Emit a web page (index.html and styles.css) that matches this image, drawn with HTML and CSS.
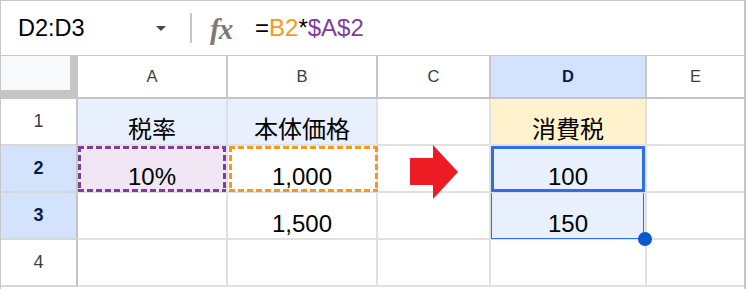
FILE: index.html
```html
<!DOCTYPE html>
<html lang="ja">
<head>
<meta charset="utf-8">
<title>消費税の計算</title>
<link rel="stylesheet" href="styles.css">
</head>
<body>
<div class="sheet">
  <div class="formula-bar">
    <div class="name-box">
      <span class="range">D2:D3</span>
      <span class="caret"></span>
    </div>
    <div class="divider"></div>
    <span class="fx">fx</span>
    <div class="formula"><span>=</span><span class="ref-b">B2</span><span>*</span><span class="ref-a">$A$2</span></div>
  </div>

  <div class="grid">
    <div class="corner"></div>
    <div class="col-head">A</div>
    <div class="col-head">B</div>
    <div class="col-head">C</div>
    <div class="col-head selected">D</div>
    <div class="col-head last">E</div>

    <div class="row-head">1</div>
    <div class="cell fill-blue">税率</div>
    <div class="cell fill-blue">本体価格</div>
    <div class="cell"></div>
    <div class="cell fill-yellow">消費税</div>
    <div class="cell last"></div>

    <div class="row-head selected">2</div>
    <div class="cell fill-lavender">10%<span class="marquee purple"></span></div>
    <div class="cell">1,000<span class="marquee orange"></span></div>
    <div class="cell"></div>
    <div class="cell fill-range">100<span class="active-box"></span></div>
    <div class="cell last"></div>

    <div class="row-head selected">3</div>
    <div class="cell"></div>
    <div class="cell">1,500</div>
    <div class="cell"></div>
    <div class="cell fill-range">150<span class="range-box"></span><span class="fill-handle"></span></div>
    <div class="cell last"></div>

    <div class="row-head">4</div>
    <div class="cell"></div>
    <div class="cell"></div>
    <div class="cell"></div>
    <div class="cell"></div>
    <div class="cell last"></div>

    <svg class="arrow" width="48" height="54" viewBox="0 0 48 54">
      <polygon points="0,13 23,13 23,0 48,27 23,54 23,40 0,40" fill="#ed1c24"/>
    </svg>
  </div>
</div>
</body>
</html>
```

FILE: styles.css
```css
* {
  box-sizing: border-box;
}

body {
  margin: 0;
  background: #ffffff;
  font-family: "Liberation Sans", Arial, "Noto Sans CJK JP", sans-serif;
}

.sheet {
  width: 746px;
  height: 289px;
  border-top: 1px solid #c7c7c7;
  border-left: 1px solid #c7c7c7;
  border-right: 2px solid #c7c7c7;
  overflow: hidden;
}

/* ---- formula bar ---- */
.formula-bar {
  height: 55px;
  display: flex;
  align-items: center;
  border-bottom: 1px solid #c7c7c7;
}

.name-box {
  width: 189px;
  display: flex;
  align-items: center;
  justify-content: space-between;
  padding: 0 24px 0 17px;
}

.range {
  font-size: 23.5px;
  color: #000000;
}

.caret {
  width: 0;
  height: 0;
  border-left: 5px solid transparent;
  border-right: 5px solid transparent;
  border-top: 5px solid #444746;
}

.divider {
  width: 2px;
  height: 30px;
  background: #c7c7c7;
}

.fx {
  margin-left: 18px;
  width: 27px;
  font-family: "Liberation Serif", "Times New Roman", serif;
  font-style: italic;
  font-weight: bold;
  font-size: 29px;
  color: #7a7a7a;
  letter-spacing: -1px;
  line-height: 1;
  margin-top: 2px;
}

.formula {
  margin-left: 18px;
  font-size: 24px;
  color: #000000;
}

.ref-b {
  color: #f7981d;
}

.ref-a {
  color: #7e3f98;
}

/* ---- grid ---- */
.grid {
  position: relative;
  display: grid;
  grid-template-columns: 77px 150px 150px 113px 156px 1fr;
  grid-template-rows: 43px repeat(4, 47px);
}

.corner {
  background: #f8f9fa;
  border-right: 8px solid #c6c6c6;
  border-bottom: 9px solid #c6c6c6;
}

.col-head {
  display: flex;
  align-items: center;
  justify-content: center;
  font-size: 16.5px;
  color: #3c4043;
  border-right: 2px solid #c7c7c7;
  border-bottom: 2px solid #c4c4c4;
}

.col-head.last {
  border-right: none;
}

.col-head.selected,
.row-head.selected {
  background: #d3e3fd;
  color: #041e49;
  font-weight: bold;
}

.row-head {
  display: flex;
  align-items: center;
  justify-content: center;
  font-size: 18px;
  color: #3c4043;
  border-right: 2px solid #c4c4c4;
  border-bottom: 2px solid #d6d6d6;
}

.cell {
  position: relative;
  display: flex;
  align-items: flex-end;
  justify-content: center;
  padding-bottom: 1px;
  font-size: 24px;
  line-height: 27px;
  color: #000000;
  border-right: 2px solid #e1e1e1;
  border-bottom: 2px solid #e1e1e1;
}

.cell.last {
  border-right: none;
}

.fill-blue {
  background: #e8f0fe;
}

.fill-yellow {
  background: #fff2cc;
}

.fill-lavender {
  background: #f1e7f4;
}

.fill-range {
  background: #e8f0fe;
}

/* copy marquee around a referenced cell */
.marquee {
  position: absolute;
  top: 0;
  left: 0;
  right: -2px;
  bottom: -1px;
  pointer-events: none;
  background:
    repeating-linear-gradient(90deg, var(--mc) 0 6px, transparent 6px 9px) top left / 100% 3px no-repeat,
    repeating-linear-gradient(90deg, var(--mc) 0 6px, transparent 6px 9px) bottom left / 100% 3px no-repeat,
    repeating-linear-gradient(180deg, var(--mc) 0 6px, transparent 6px 9px) top left / 3px 100% no-repeat,
    repeating-linear-gradient(180deg, var(--mc) 0 6px, transparent 6px 9px) top right / 3px 100% no-repeat;
}

.marquee.purple {
  --mc: #7e3f98;
  right: 0;
}

.marquee.orange {
  --mc: #f7981d;
  left: 1px;
}

/* active cell and selected range */
.active-box {
  position: absolute;
  top: 0;
  left: 0;
  right: 0;
  bottom: -1px;
  border: 3px solid #2f6fe4;
}

.range-box {
  position: absolute;
  top: 0;
  left: 0;
  right: 1px;
  bottom: -1px;
  border: 1px solid #2f6fe4;
  border-top: none;
}

.fill-handle {
  position: absolute;
  right: -7px;
  bottom: -8px;
  width: 14px;
  height: 14px;
  border-radius: 50%;
  background: #0b57d0;
  z-index: 2;
}

.arrow {
  position: absolute;
  left: 409px;
  top: 89px;
}
```
